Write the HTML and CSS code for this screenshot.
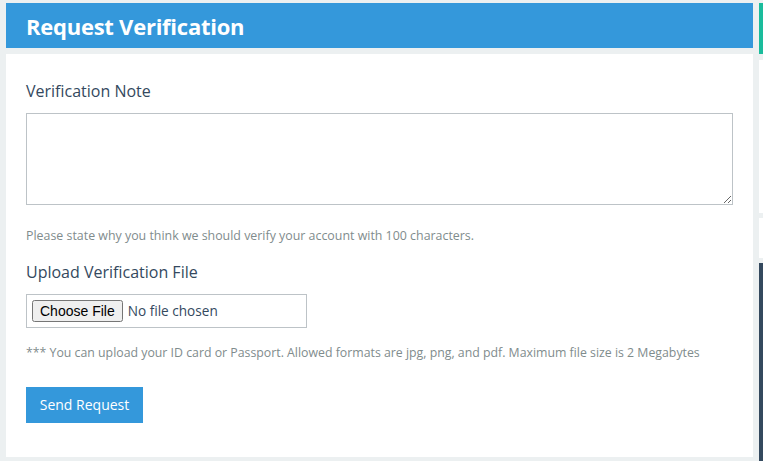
FILE: index.html
```html
<!DOCTYPE html>
<html lang="en">
<head>
<meta charset="utf-8">
<title>Request Verification</title>
<link rel="stylesheet" href="styles.css">
</head>
<body>
<div class="page">
  <main class="main">
    <header class="title-bar">
      <h1 class="title">Request Verification</h1>
    </header>
    <section class="panel">
      <form class="form">
        <label class="label" for="note">Verification Note</label>
        <textarea id="note" class="textarea"></textarea>
        <p class="help">Please state why you think we should verify your account with 100 characters.</p>
        <label class="label label-upload" for="file">Upload Verification File</label>
        <div class="file-wrap"><input id="file" class="file" type="file"></div>
        <p class="help note">*** You can upload your ID card or Passport. Allowed formats are jpg, png, and pdf. Maximum file size is 2 Megabytes</p>
        <div class="actions"><button type="button" class="btn">Send Request</button></div>
      </form>
    </section>
  </main>
  <aside class="side">
    <div class="side-green"></div>
    <div class="side-white side-white-1"></div>
    <div class="side-white side-white-2"></div>
    <div class="side-dark"></div>
  </aside>
</div>
</body>
</html>
```
FILE: styles.css
```css
* { box-sizing: border-box; }
html, body { margin: 0; padding: 0; }
body {
  background: #ecf0f1;
  font-family: "Open Sans", "Noto Sans", sans-serif;
  color: #34495e;
  width: 763px;
  height: 461px;
  overflow: hidden;
}
.page {
  display: flex;
  gap: 6px;
  padding: 3px 0 0 6px;
  height: 461px;
}
.main {
  width: 747px;
  flex: none;
  display: flex;
  flex-direction: column;
  gap: 6px;
}
.title-bar {
  background: #3498db;
  height: 45px;
  display: flex;
  align-items: center;
  padding-left: 20px;
}
.title {
  margin: 0;
  color: #fff;
  font-size: 22px;
  font-weight: 700;
  letter-spacing: -0.25px;
}
.panel {
  background: #fff;
  height: 403px;
  padding: 27px 20px 0 20px;
}
.form { display: flex; flex-direction: column; align-items: flex-start; }
.label {
  font-size: 16px;
  line-height: 20px;
  color: #34495e;
  margin-bottom: 12px;
}
.textarea {
  width: 707px;
  height: 92px;
  border: 1px solid #bdc3c7;
  resize: vertical;
  margin: 0;
  display: block;
}
.help {
  margin: 22px 0 0 0;
  font-size: 12.4px;
  line-height: 18px;
  color: #7f8c8d;
}
.label-upload { margin-top: 17px; }
.file-wrap {
  width: 281px;
  height: 34px;
  border: 1px solid #bdc3c7;
  display: flex;
  align-items: center;
  padding-left: 5px;
}
.file {
  font-family: "Open Sans", sans-serif;
  font-size: 13.6px;
  color: #34495e;
}
.file::file-selector-button {
  font-family: "Liberation Sans", Arial, sans-serif;
  font-size: 14px;
  margin-right: 5px;
}
.note { margin-top: 16px; font-size: 12.32px; }
.actions { margin-top: 25px; }
.btn {
  background: #3498db;
  color: #fff;
  border: 0;
  height: 36px;
  width: 117px;
  font-family: "Open Sans", sans-serif;
  font-size: 14px;
  padding: 0 0 1px 0;
}
.side {
  flex: 1;
  display: flex;
  flex-direction: column;
}
.side-green { background: #1abc9c; height: 51px; flex: none; }
.side-white { background: #fff; flex: none; }
.side-white-1 { height: 153px; margin-top: 6px; }
.side-white-2 { height: 40px; margin-top: 5px; }
.side-dark { background: #34495e; flex: 1; margin-top: 5px; }
```
